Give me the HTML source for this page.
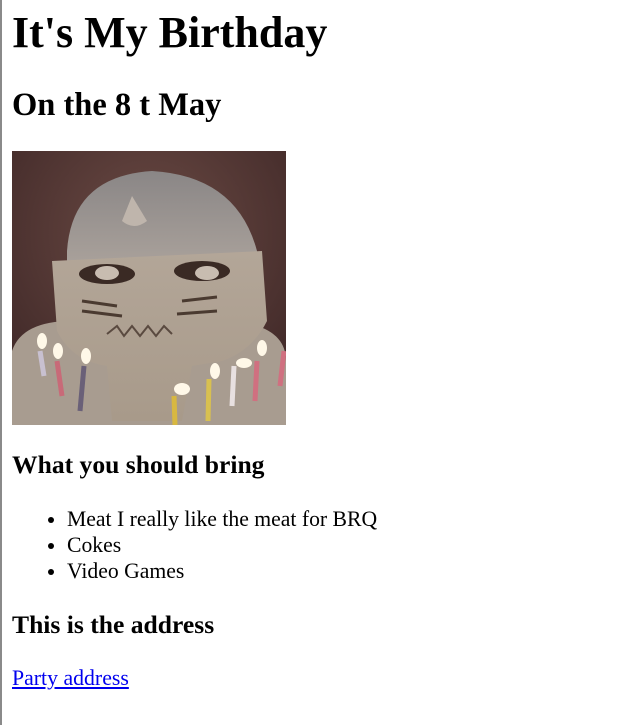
<!DOCTYPE html>
<html><head><meta charset="utf-8"><style>
html,body{margin:0;padding:0;background:#fff;width:629px;height:725px;overflow:hidden;position:relative;font-family:"Liberation Serif",serif;color:#000}
.bl{position:absolute;left:0;top:0;width:2px;height:725px;background:#8a8a8a}
.t{position:absolute;left:12px;margin:0;line-height:1;white-space:nowrap}
h1.t{font-size:44px;top:11px}
h2.t{font-size:32.5px;top:89px}
h3.t{font-size:25.6px}
ul{position:absolute;left:0;top:506px;margin:0;padding:0 0 0 67px;font-size:21.7px;line-height:26px}
a{color:#0000ee;text-decoration:underline}
svg{position:absolute;left:12px;top:151px}
</style></head><body>
<div class="bl"></div>
<h1 class="t">It's My Birthday</h1>
<h2 class="t">On the 8 t May</h2>
<svg width="274" height="274" viewBox="0 0 274 274">
<defs>
<radialGradient id="bg" cx="0.5" cy="0.3" r="0.8"><stop offset="0" stop-color="#6b4a44"/><stop offset="1" stop-color="#3a2424"/></radialGradient>
<linearGradient id="hel" x1="0" y1="0" x2="0" y2="1"><stop offset="0" stop-color="#8a8686"/><stop offset="1" stop-color="#a8a09a"/></linearGradient>
<linearGradient id="face" x1="0" y1="0" x2="0" y2="1"><stop offset="0" stop-color="#b3a698"/><stop offset="1" stop-color="#a89a8a"/></linearGradient>
</defs>
<rect width="274" height="274" fill="url(#bg)"/>
<path d="M0 200 Q10 170 60 170 L220 170 Q274 175 274 210 L274 274 L0 274Z" fill="#a89c90"/>
<path d="M55 100 Q60 25 140 20 Q225 25 245 100 L245 110 L55 110Z" fill="url(#hel)"/>
<path d="M40 110 L250 100 L255 170 Q240 200 210 210 L180 215 L170 270 L100 270 L95 215 Q60 210 45 180Z" fill="url(#face)"/>
<path d="M110 70 L120 45 L135 70 Q122 80 110 70Z" fill="#bfb5ac"/>
<ellipse cx="95" cy="123" rx="28" ry="10" fill="#3a2a24"/>
<ellipse cx="190" cy="120" rx="28" ry="10" fill="#3a2a24"/>
<ellipse cx="95" cy="122" rx="12" ry="7" fill="#c8bcb0"/>
<ellipse cx="195" cy="122" rx="12" ry="7" fill="#c8bcb0"/>
<path d="M70 150 L105 155 M70 160 L110 165 M170 150 L205 146 M165 163 L205 160" stroke="#4a3a30" stroke-width="3"/>
<path d="M95 183 L105 175 L112 185 L120 175 L128 185 L136 175 L144 185 L152 175 L160 183" stroke="#5a4a40" stroke-width="2" fill="none"/>
<g stroke-width="5">
<line x1="28" y1="200" x2="32" y2="225" stroke="#c8c0d0"/>
<line x1="45" y1="210" x2="50" y2="245" stroke="#c86a78"/>
<line x1="72" y1="215" x2="68" y2="260" stroke="#6a6078"/>
<line x1="162" y1="245" x2="163" y2="274" stroke="#d8b840"/>
<line x1="197" y1="228" x2="196" y2="270" stroke="#d8c050"/>
<line x1="222" y1="215" x2="220" y2="255" stroke="#e8e0e0"/>
<line x1="245" y1="210" x2="243" y2="250" stroke="#d07080"/>
<line x1="272" y1="200" x2="268" y2="235" stroke="#d07080"/>
</g>
<g fill="#fff8e8">
<ellipse cx="30" cy="190" rx="5" ry="8"/><ellipse cx="46" cy="200" rx="5" ry="8"/><ellipse cx="74" cy="205" rx="5" ry="8"/>
<ellipse cx="170" cy="238" rx="8" ry="6"/><ellipse cx="203" cy="220" rx="5" ry="8"/><ellipse cx="232" cy="212" rx="8" ry="5"/><ellipse cx="250" cy="197" rx="5" ry="8"/>
</g>
</svg>
<h3 class="t" style="top:452px">What you should bring</h3>
<ul><li>Meat I really like the meat for BRQ</li><li>Cokes</li><li>Video Games</li></ul>
<h3 class="t" style="top:612px">This is the address</h3>
<div class="t" style="top:668px;font-size:21.8px"><a>Party address</a></div>
</body></html>
